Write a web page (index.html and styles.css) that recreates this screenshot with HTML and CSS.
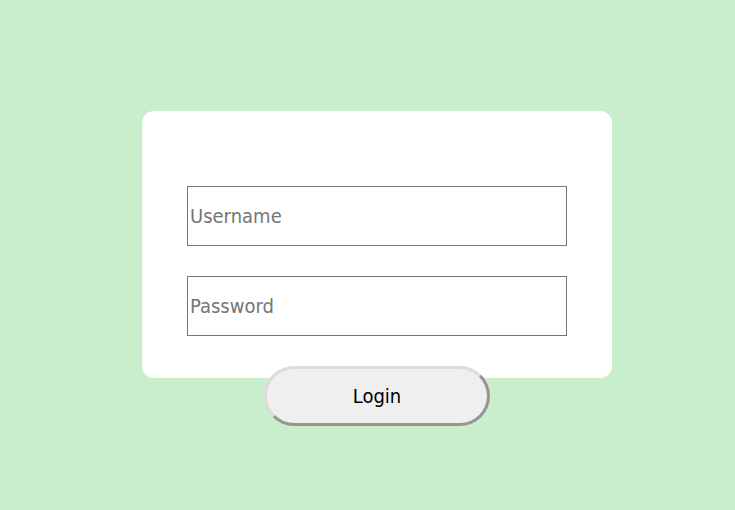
FILE: index.html
```html
<!DOCTYPE html>
<html lang="en">
<head>
    <meta charset="UTF-8">
    <meta name="viewport" content="width=device-width, initial-scale=1.0">
    <title>Login</title>
    <link rel="stylesheet" href="styles.css">
</head>
<body>
    <div class="wrapper">
        <form class="login-card">
            <input type="text" name="username" placeholder="Username">
            <input type="password" name="password" placeholder="Password">
        </form>
        <button type="submit" class="login-btn">Login</button>
    </div>
</body>
</html>
```

FILE: styles.css
```css
body {
    margin: 0;
    padding: 0;
    background-color: #c8eecb;
    font-family: 'DejaVu Sans Condensed', 'DejaVu Sans', Tahoma, sans-serif;
}

.wrapper {
    display: flex;
    flex-direction: column;
    align-items: center;
    width: 470px;
    padding-top: 111px;
    padding-left: 142px;
}

.login-card {
    box-sizing: border-box;
    width: 470px;
    height: 267px;
    padding: 75px 45px 0 45px;
    background-color: #fff;
    border-radius: 12px;
    display: flex;
    flex-direction: column;
    gap: 30px;
}

.login-card input {
    box-sizing: border-box;
    width: 380px;
    height: 60px;
    margin: 0;
    padding: 1px 2px;
    border: 1px solid #767676;
    font-family: inherit;
    font-size: 20px;
    color: #333;
}

.login-card input::placeholder {
    color: #757575;
}

.login-btn {
    box-sizing: border-box;
    width: 226px;
    height: 60px;
    margin-top: -12px;
    background-color: #efefef;
    border: 3px solid;
    border-color: #dcdcdc #959595 #959595 #dcdcdc;
    border-radius: 30px;
    font-family: inherit;
    font-size: 20px;
    color: #000;
    cursor: pointer;
}
```
